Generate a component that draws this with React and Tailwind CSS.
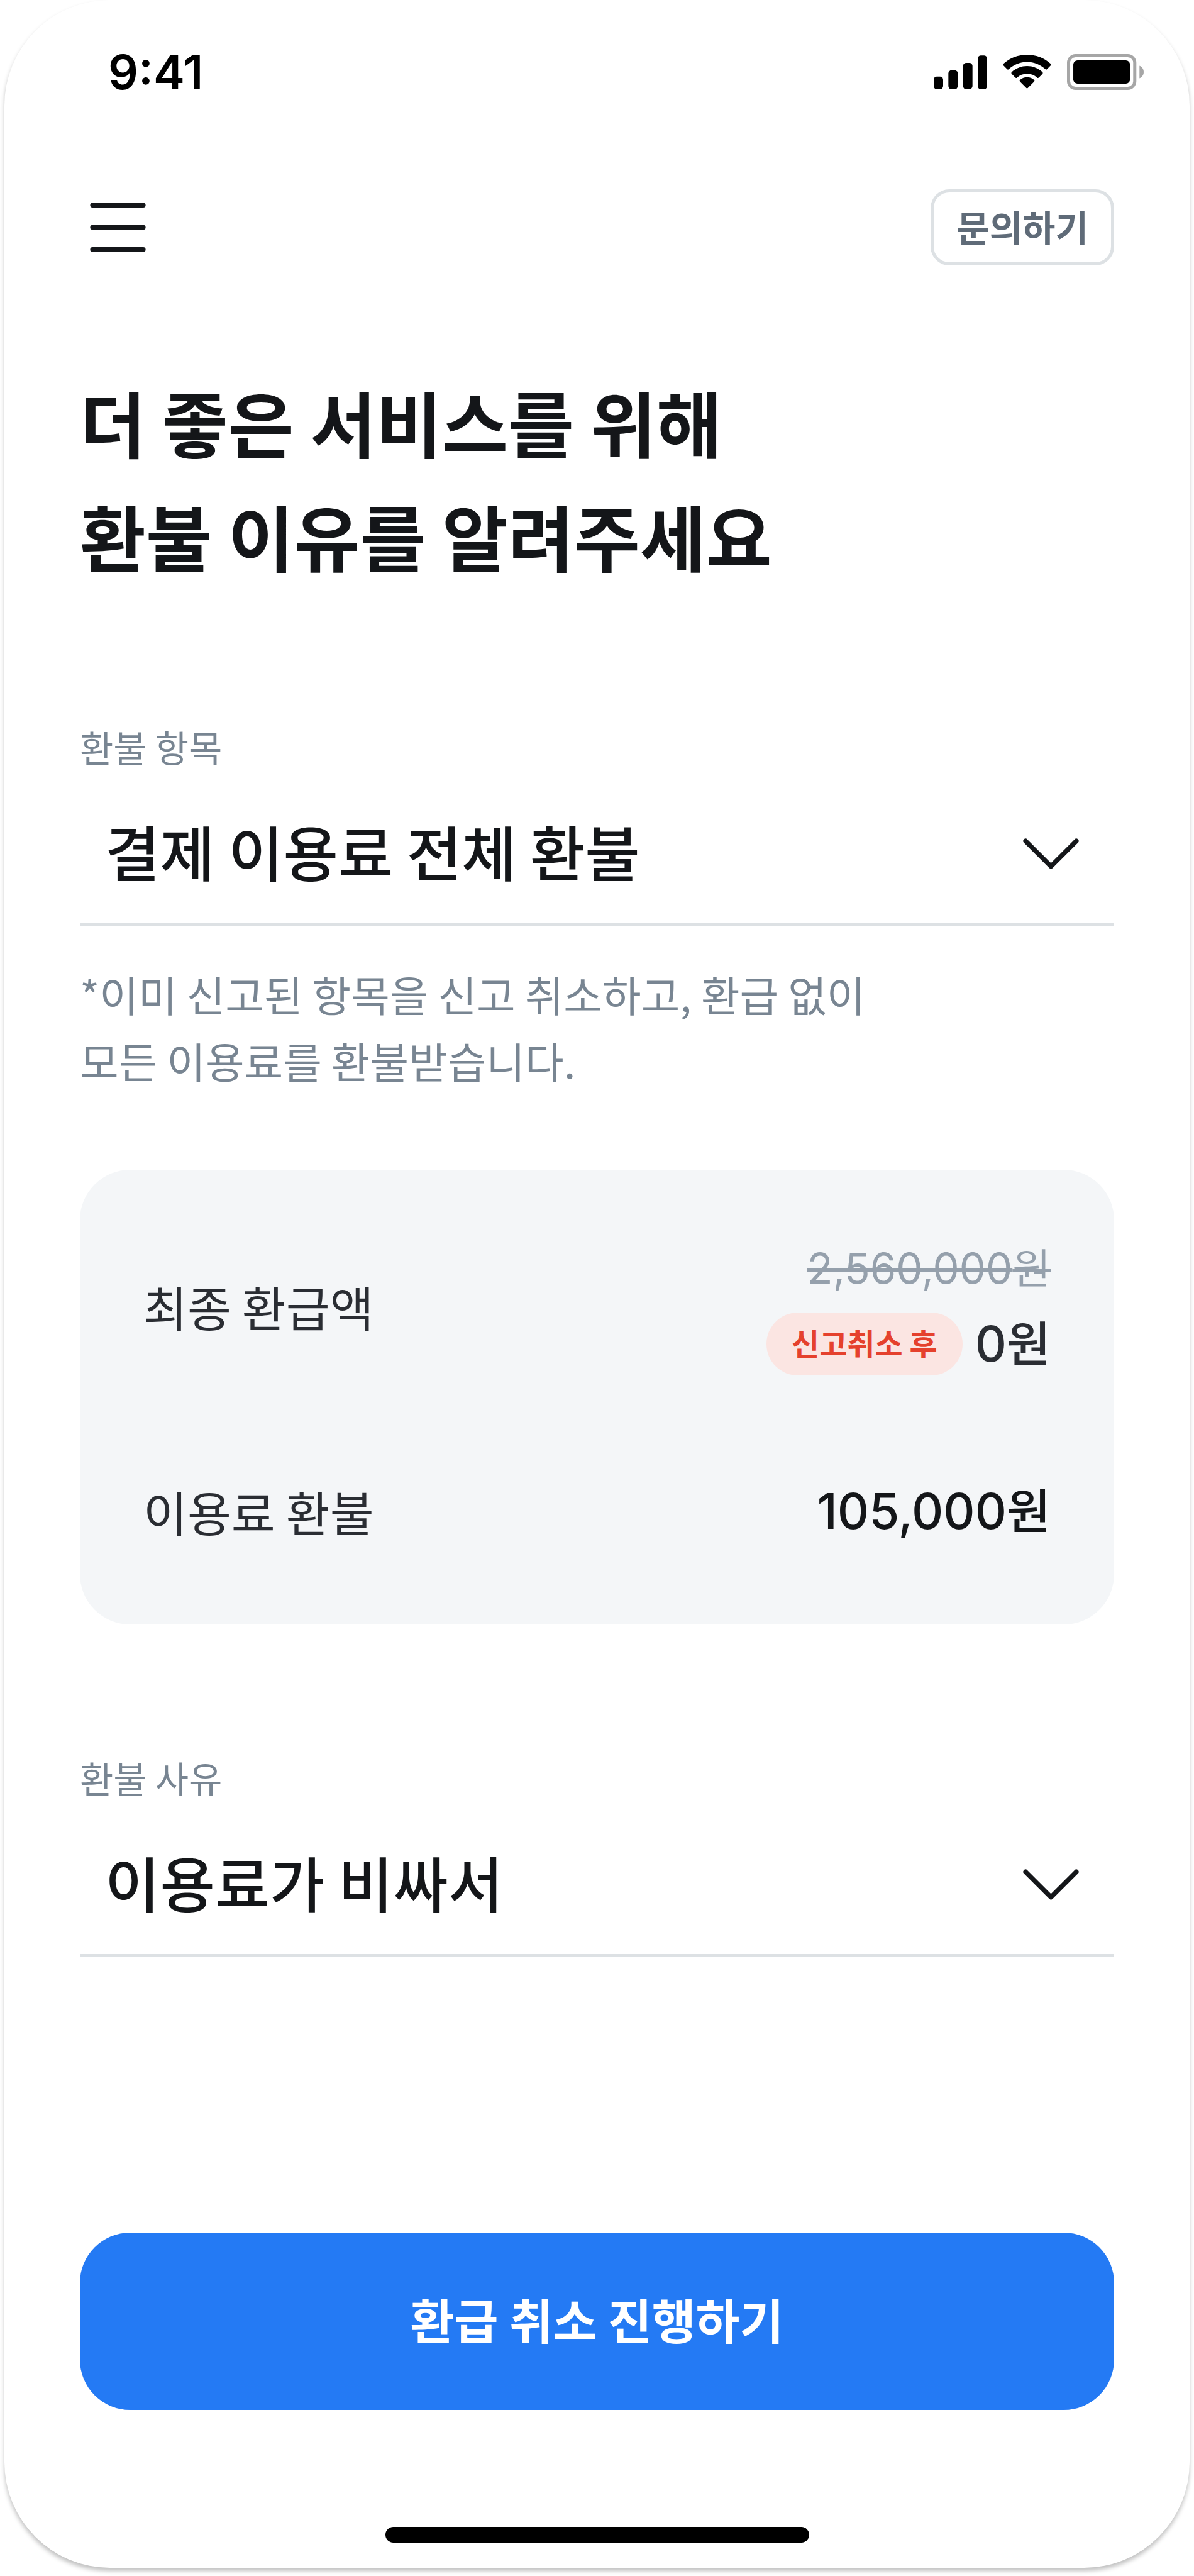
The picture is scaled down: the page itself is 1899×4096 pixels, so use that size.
import React, { useState } from 'react';

const refundItems = ['결제 이용료 전체 환불'];
const refundReasons = ['이용료가 비싸서'];

const SignalIcon = () => (
  <svg className="h-[54px] w-[85px]" viewBox="0 0 153 96" aria-hidden="true">
    <rect x="0" y="60" width="27" height="36" rx="9" />
    <rect x="42" y="42" width="27" height="54" rx="9" />
    <rect x="84" y="21" width="27" height="75" rx="9" />
    <rect x="126" y="0" width="27" height="96" rx="9" />
  </svg>
);

const WifiIcon = () => (
  <svg className="h-[55px] w-[77px]" viewBox="0 0 138 99" aria-hidden="true">
    <path d="M69 20.500c19.500 0 38.300 7.500 52.500 21a3.300 3.300 0 0 0 4.600 0l10.200-10.400a3.700 3.700 0 0 0 0-5.300c-37.600-34.400-97-34.400-134.600 0a3.700 3.700 0 0 0 0 5.300l10.200 10.400a3.300 3.300 0 0 0 4.600 0C30.700 28 49.500 20.500 69 20.500z" />
    <path d="M69 54.300c10.700 0 21 4 28.900 11.200a3.600 3.600 0 0 0 4.900-.1l10.200-10.400a3.700 3.700 0 0 0-.1-5.400c-24.700-23-62.900-23-87.800 0a3.700 3.700 0 0 0-.1 5.400l10.200 10.400a3.600 3.600 0 0 0 4.900.1C48 58.300 58.300 54.300 69 54.300z" />
    <path d="M89 77.200a3.600 3.600 0 0 0-.1-5.400c-11.500-10.100-28.300-10.100-39.800 0a3.600 3.600 0 0 0-.1 5.400l17.600 17.900a3.400 3.400 0 0 0 4.800 0z" />
  </svg>
);

const BatteryIcon = () => (
  <svg className="h-[57px] w-[122px]" viewBox="0 0 219 102" aria-hidden="true">
    <rect x="4.500" y="4.500" width="189" height="93" rx="20" fill="none" stroke="#a6a6a6" strokeWidth="9" />
    <rect x="18" y="18" width="162" height="66" rx="12" />
    <path d="M207 33v36c7.300-3 12-10 12-18s-4.700-15-12-18z" fill="#a6a6a6" />
  </svg>
);

const MenuIcon = () => (
  <svg className="size-[121px]" viewBox="0 0 24 24" fill="none" stroke="#141619" strokeWidth="1.5" strokeLinecap="round" aria-hidden="true">
    <path d="M4 5h16M4 12h16M4 19h16" />
  </svg>
);

const ChevronIcon = () => (
  <svg className="pointer-events-none col-start-1 row-start-1 mr-[40px] size-[121px] self-center justify-self-end" viewBox="0 0 24 24" fill="none" stroke="#141619" strokeWidth="1.5" strokeLinecap="round" strokeLinejoin="round" aria-hidden="true">
    <path d="M4 8l8 8 8-8" />
  </svg>
);

const SelectField = ({ id, label, options, value, onChange }) => (
  <div>
    <label htmlFor={id} className="block text-[58px] leading-[90px] text-[#788592]">{label}</label>
    <div className="mt-[14px] grid border-b-[5px] border-[#dde1e4]">
      <select
        id={id}
        value={value}
        onChange={(e) => onChange(e.target.value)}
        className="col-start-1 row-start-1 h-[222px] w-full appearance-none bg-transparent px-[40px] pb-[8px] text-[95px] font-medium text-[#141619] outline-none"
      >
        {options.map((option) => (
          <option key={option}>{option}</option>
        ))}
      </select>
      <ChevronIcon />
    </div>
  </div>
);

const App = () => {
  const [item, setItem] = useState(refundItems[0]);
  const [reason, setReason] = useState(refundReasons[0]);

  return (
    <div className="min-h-screen overflow-hidden bg-white px-[7px] pb-[13px] font-['Noto_Sans_CJK_KR',sans-serif]">
      <div className="flex min-h-[calc(100vh-13px)] flex-col rounded-[168px] bg-white shadow-[0_5px_7px_rgba(0,0,0,0.25)]">
        <div className="flex h-[221px] items-center justify-between pt-[8px] pr-[73px] pl-[165px]">
          <span className="font-['Inter',sans-serif] text-[75px] leading-[90px] font-semibold text-black">9:41</span>
          <div className="flex items-center gap-[25px]">
            <SignalIcon />
            <WifiIcon />
            <BatteryIcon />
          </div>
        </div>

        <header className="mt-[80px] flex items-center justify-between px-[120px]">
          <button type="button" aria-label="메뉴">
            <MenuIcon />
          </button>
          <button type="button" className="h-[121px] rounded-[30px] border-[5px] border-[#dde1e4] px-[36px] pb-[5px] text-[57px] leading-[80px] font-bold text-[#5f6b78]">
            문의하기
          </button>
        </header>

        <main className="px-[120px]">
          <h1 className="mt-[157px] text-[114px] leading-[181px] font-bold text-[#141619]">
            더 좋은 서비스를 위해
            <br />
            환불 이유를 알려주세요
          </h1>

          <div className="mt-[201px]">
            <SelectField id="refund-item" label="환불 항목" options={refundItems} value={item} onChange={setItem} />
          </div>
          <p className="mt-[54px] text-[67px] leading-[106px] text-[#788592]">
            *이미 신고된 항목을 신고 취소하고, 환급 없이
            <br />
            모든 이용료를 환불받습니다.
          </p>

          <dl className="mt-[121px] flex flex-col gap-[146px] rounded-[80px] bg-[#f4f6f8] px-[101px] pt-[97px] pb-[120px] text-[76px] leading-[120px] text-[#2a2d33]">
            <div className="flex items-center justify-between">
              <dt>최종 환급액</dt>
              <dd className="flex flex-col items-end font-['Inter','Noto_Sans_CJK_KR',sans-serif]">
                <s className="text-[67px] text-[#95a0ac]">
                  2,560,000<span className="text-[66px]">원</span>
                </s>
                <span className="flex items-center gap-[20px]">
                  <span className="rounded-full bg-[#fbe5e2] px-[40px] pb-[5px] font-['Noto_Sans_CJK_KR',sans-serif] text-[48px] leading-[95px] font-bold text-[#e5412d]">신고취소 후</span>
                  <span className="text-[78px] font-medium">0<span className="text-[76px]">원</span></span>
                </span>
              </dd>
            </div>
            <div className="flex items-center justify-between">
              <dt>이용료 환불</dt>
              <dd className="font-['Inter','Noto_Sans_CJK_KR',sans-serif] text-[78px] font-medium text-[#141619]">105,000<span className="text-[76px]">원</span></dd>
            </div>
          </dl>

          <div className="mt-[198px]">
            <SelectField id="refund-reason" label="환불 사유" options={refundReasons} value={reason} onChange={setReason} />
          </div>
        </main>

        <footer className="mt-auto flex flex-col items-center px-[120px] pb-[40px]">
          <button type="button" className="mb-[186px] h-[282px] w-full rounded-[80px] bg-[#247af4] pb-[8px] text-[76px] font-bold text-white">
            환급 취소 진행하기
          </button>
          <div className="h-[25px] w-[674px] rounded-full bg-black" />
        </footer>
      </div>
    </div>
  );
};

export default App;
